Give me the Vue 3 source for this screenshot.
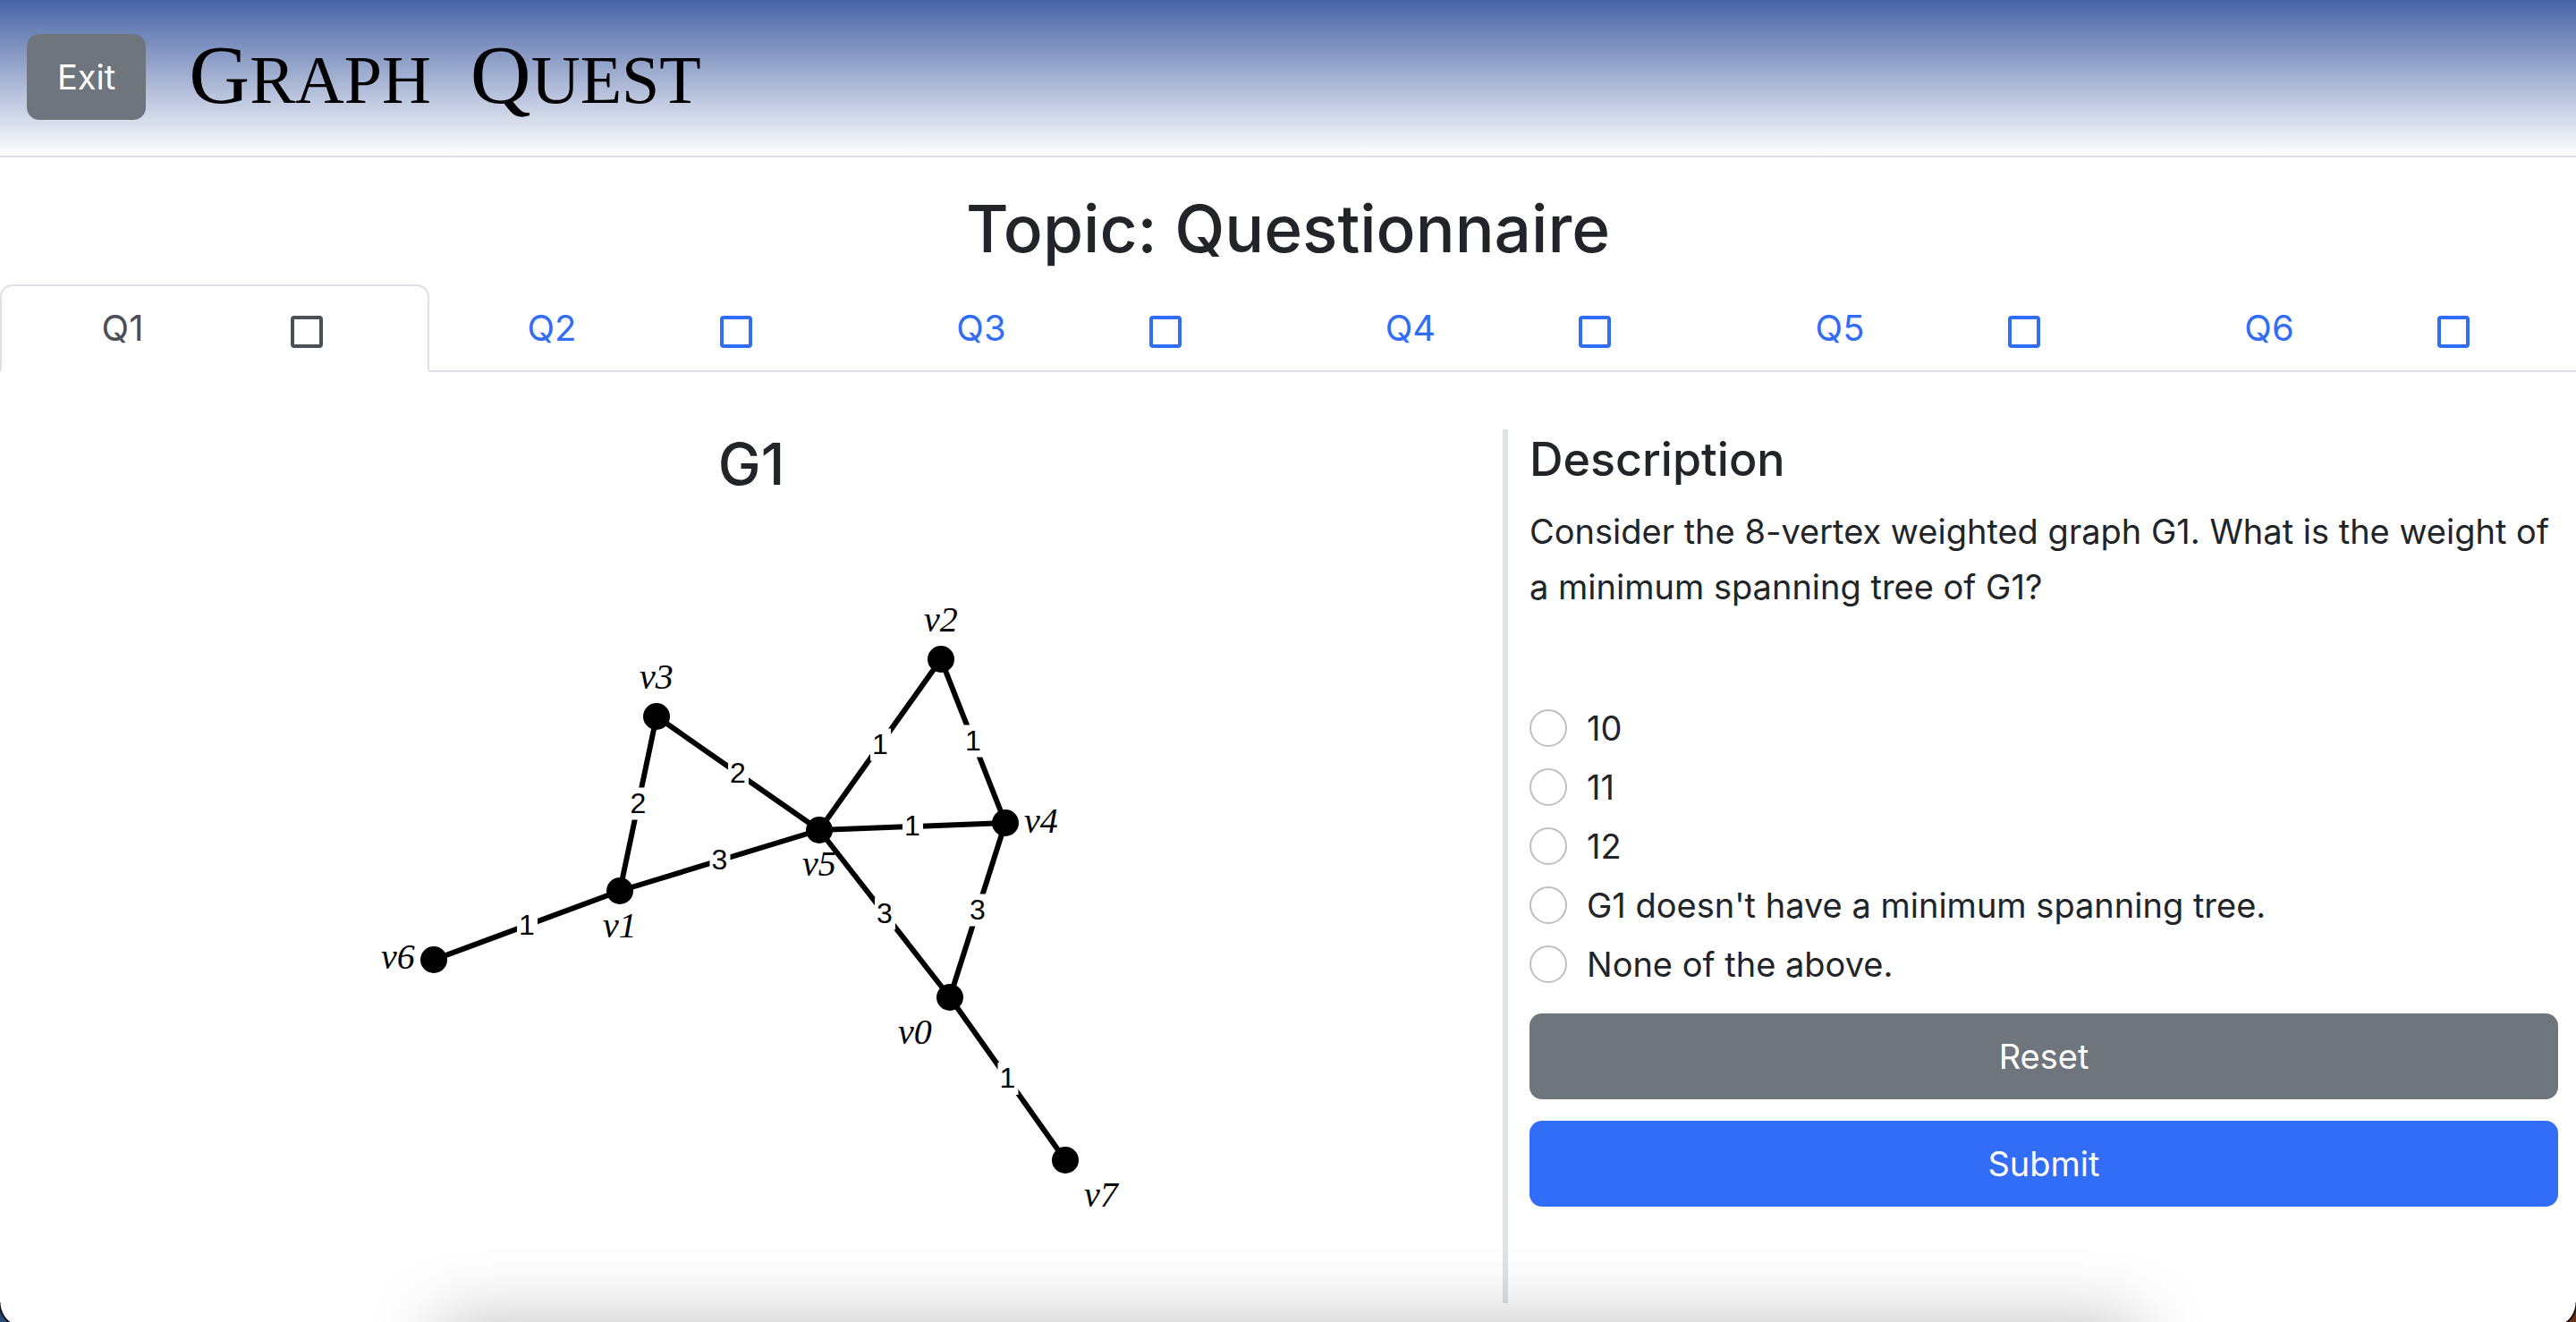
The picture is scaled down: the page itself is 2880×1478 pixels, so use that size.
<script setup>
import { ref } from 'vue'

const tabs = ['Q1', 'Q2', 'Q3', 'Q4', 'Q5', 'Q6']
const active = ref('Q1')

const options = [
  '10',
  '11',
  '12',
  "G1 doesn't have a minimum spanning tree.",
  'None of the above.',
]
const answer = ref(null)

// Node centres, with the anchor point of each node's label
const nodes = {
  v0: { x: 1062, y: 1115, lx: 1023, ly: 1167 },
  v1: { x: 693, y: 996, lx: 693, ly: 1048 },
  v2: { x: 1052, y: 737, lx: 1052, ly: 706 },
  v3: { x: 734, y: 801, lx: 734, ly: 770 },
  v4: { x: 1124, y: 920, lx: 1164, ly: 931 },
  v5: { x: 916, y: 928, lx: 916, ly: 979 },
  v6: { x: 485, y: 1073, lx: 445, ly: 1083 },
  v7: { x: 1191, y: 1297, lx: 1231, ly: 1349 },
}

const edges = [
  ['v6', 'v1', 1],
  ['v1', 'v3', 2],
  ['v3', 'v5', 2],
  ['v1', 'v5', 3],
  ['v5', 'v2', 1],
  ['v2', 'v4', 1],
  ['v5', 'v4', 1],
  ['v5', 'v0', 3],
  ['v4', 'v0', 3],
  ['v0', 'v7', 1],
].map(([a, b, weight]) => {
  const p = nodes[a]
  const q = nodes[b]
  return { id: a + b, p, q, weight, mx: (p.x + q.x) / 2, my: (p.y + q.y) / 2 }
})
</script>

<template>
  <div class="page">
    <header class="topbar">
      <button type="button" class="btn btn-secondary">Exit</button>
      <div class="brand">
        <span><span class="big">G</span>RAPH</span>
        <span><span class="big">Q</span>UEST</span>
      </div>
    </header>

    <h1 class="title">Topic: Questionnaire</h1>

    <nav class="tabs">
      <a
        v-for="tab in tabs"
        :key="tab"
        href="#"
        class="tab"
        :class="{ active: tab === active }"
        @click.prevent="active = tab"
      >
        <span>{{ tab }}</span>
        <svg class="box" viewBox="0 0 36 36" aria-hidden="true">
          <rect x="2" y="2" width="32" height="32" rx="2" fill="none" stroke="currentColor" stroke-width="4" />
        </svg>
      </a>
    </nav>

    <main class="content">
      <section class="graph">
        <h2>G1</h2>
        <svg viewBox="0 565 1680 892" role="img" aria-label="Weighted graph G1">
          <g v-for="e in edges" :key="e.id">
            <line :x1="e.p.x" :y1="e.p.y" :x2="e.q.x" :y2="e.q.y" class="edge" />
            <rect :x="e.mx - 11" :y="e.my - 18" width="23" height="36" fill="#fff" />
            <text :x="e.mx" :y="e.my + 10" class="weight">{{ e.weight }}</text>
          </g>
          <g v-for="(n, name) in nodes" :key="name">
            <circle :cx="n.x" :cy="n.y" r="15" />
            <text :x="n.lx" :y="n.ly" class="label">{{ name }}</text>
          </g>
        </svg>
      </section>

      <form class="question" @submit.prevent @reset="answer = null">
        <h3>Description</h3>
        <p>Consider the 8-vertex weighted graph G1. What is the weight of a minimum spanning tree of G1?</p>
        <div class="options">
          <label v-for="(option, i) in options" :key="i" class="option">
            <input v-model="answer" type="radio" name="answer" :value="i" />
            <span>{{ option }}</span>
          </label>
        </div>
        <div class="actions">
          <button type="reset" class="btn btn-secondary">Reset</button>
          <button type="submit" class="btn btn-primary">Submit</button>
        </div>
      </form>
    </main>

    <div class="dock-shadow"></div>
    <div class="corner left"></div>
    <div class="corner right"></div>
  </div>
</template>

<style>
body {
  margin: 0;
  background: #fff;
}
</style>

<style scoped>
.page {
  box-sizing: border-box;
  font-family: Inter, "Liberation Sans", sans-serif;
  font-size: 38px;
  line-height: 62px;
  color: #212529;
  overflow: hidden;
}
h1,
h2,
h3,
p {
  margin: 0;
}
h1,
h2,
h3 {
  font-weight: 500;
}

.topbar {
  display: flex;
  align-items: center;
  gap: 48px;
  box-sizing: border-box;
  height: 176px;
  padding: 0 30px 2px;
  border-bottom: 2px solid #dee2e6;
  background: linear-gradient(#4864a5, #fff);
}
.brand {
  display: flex;
  gap: 44px;
  font-family: "Liberation Serif", serif;
  font-size: 76px;
  line-height: 112px;
  color: #000;
  white-space: nowrap;
}
.brand .big {
  font-size: 94px;
}

.btn {
  box-sizing: border-box;
  height: 96px;
  padding: 0 34px;
  border: 0;
  border-radius: 14px;
  font: inherit;
  color: #fff;
  cursor: pointer;
}
.btn-secondary {
  background: #6e757c;
}
.btn-primary {
  background: #316df6;
}

.title {
  padding: 32px 0 14px;
  font-size: 73px;
  line-height: 96px;
  text-align: center;
}

.tabs {
  display: flex;
  border-bottom: 2px solid #dee2e6;
  font-size: 40px;
}
.tab {
  flex: 1;
  display: grid;
  grid-template-columns: 1fr 1fr;
  align-items: center;
  justify-items: center;
  box-sizing: border-box;
  height: 98px;
  margin-bottom: -2px;
  padding: 0 32px;
  border: 2px solid transparent;
  border-radius: 14px 14px 0 0;
  color: #316df6;
  text-decoration: none;
}
.tab.active {
  border-color: #dee2e6 #dee2e6 #fff;
  background: #fff;
  color: #495057;
}
.box {
  width: 36px;
  height: 36px;
  margin-top: 8px;
}

.content {
  display: grid;
  grid-template-columns: minmax(0, 7fr) minmax(0, 5fr);
  padding: 64px 0 21px;
}
.graph h2 {
  margin-bottom: 8px;
  font-size: 64px;
  line-height: 77px;
  text-align: center;
}
.graph svg {
  display: block;
  width: 100%;
}
.edge {
  stroke: #000;
  stroke-width: 6px;
}
.weight {
  font-family: "Liberation Sans", sans-serif;
  font-size: 32px;
  text-anchor: middle;
  fill: #000;
}
.label {
  font-family: "Liberation Serif", serif;
  font-style: italic;
  font-size: 40px;
  text-anchor: middle;
  fill: #000;
}

.question {
  padding: 0 20px 0 24px;
  border-left: 6px solid #dee2e6;
}
.question h3 {
  margin-bottom: 16px;
  font-size: 52px;
  line-height: 67px;
}
.options {
  padding: 94px 0 22px;
}
.option {
  display: flex;
  align-items: center;
  gap: 22px;
  height: 66px;
}
.option input {
  appearance: none;
  box-sizing: border-box;
  flex: none;
  width: 42px;
  height: 42px;
  margin: 0;
  border: 2px solid #bfbfbf;
  border-radius: 50%;
  background: #fff;
}
.option input:checked {
  border: 12px solid #316df6;
}
.actions {
  display: flex;
  flex-direction: column;
  gap: 24px;
}

.dock-shadow {
  position: fixed;
  bottom: -100px;
  left: 17%;
  right: 17%;
  height: 100px;
  box-shadow: 0 0 80px rgba(0, 0, 0, 0.25);
  pointer-events: none;
}
.corner {
  position: fixed;
  bottom: 0;
  width: 14px;
  height: 22px;
}
.corner.left {
  left: 0;
  background: radial-gradient(circle at 28px 0, transparent 27px, #0d1420 28px, #0d1420 29px, #2c4a78 30px);
}
.corner.right {
  right: 0;
  background: radial-gradient(circle at -14px 0, transparent 27px, #1a0d08 28px, #1a0d08 29px, #6b3018 30px);
}
</style>
